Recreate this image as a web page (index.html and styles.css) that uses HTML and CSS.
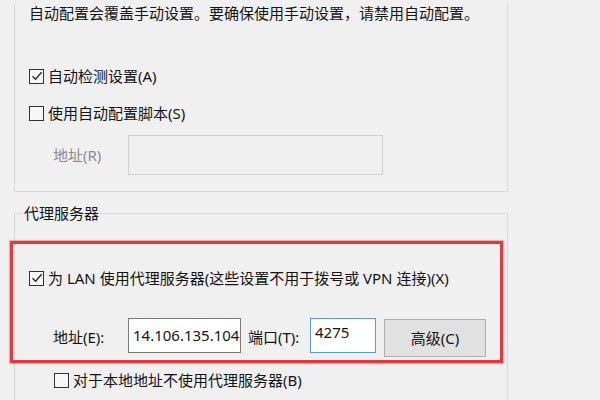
FILE: index.html
```html
<!DOCTYPE html>
<html lang="zh-CN">
<head>
<meta charset="utf-8">
<title>局域网(LAN)设置</title>
<link rel="stylesheet" href="styles.css">
</head>
<body>
<div class="group group-auto">
  <p class="desc">自动配置会覆盖手动设置。要确保使用手动设置，请禁用自动配置。</p>
  <div class="check-row row-detect">
    <span class="box checked"><svg viewBox="0 0 14 14" width="14" height="14"><path d="M2.5 7.2 L5.6 10.3 L11.6 3.2" fill="none" stroke="#2b2b2b" stroke-width="1.4"/></svg></span>
    <span class="label">自动检测设置(A)</span>
  </div>
  <div class="check-row row-script">
    <span class="box"></span>
    <span class="label">使用自动配置脚本(S)</span>
  </div>
  <div class="field-row row-url">
    <span class="field-label disabled">地址(R)</span>
    <span class="input input-disabled"></span>
  </div>
</div>

<div class="group group-proxy">
  <div class="legend">代理服务器</div>
  <div class="highlight">
    <div class="check-row row-lan">
      <span class="box checked"><svg viewBox="0 0 14 14" width="14" height="14"><path d="M2.5 7.2 L5.6 10.3 L11.6 3.2" fill="none" stroke="#2b2b2b" stroke-width="1.4"/></svg></span>
      <span class="label">为 LAN 使用代理服务器(这些设置不用于拨号或 VPN 连接)(X)</span>
    </div>
    <div class="field-row row-proxy">
      <span class="field-label addr-label">地址(E):</span>
      <span class="input input-addr">14.106.135.104</span>
      <span class="field-label port-label">端口(T):</span>
      <span class="input input-port">4275</span>
      <span class="button">高级(C)</span>
    </div>
  </div>
  <div class="check-row row-bypass">
    <span class="box"></span>
    <span class="label">对于本地地址不使用代理服务器(B)</span>
  </div>
</div>
</body>
</html>
```

FILE: styles.css
```css
html, body {
  margin: 0;
  padding: 0;
  background: #f0f0f0;
}
body {
  width: 600px;
  height: 400px;
  overflow: hidden;
  font-family: "Noto Sans", "Noto Sans CJK SC", sans-serif;
  font-size: 15px;
  line-height: 20px;
  color: #141414;
}
.group {
  margin-left: 14px;
  width: 492px;
  border: 1px solid #d9d9d9;
}
.group-auto {
  border-top: none;
  padding-bottom: 16px;
}
.desc {
  margin: 3px 0 0 14px;
  white-space: nowrap;
}
.check-row {
  display: flex;
  align-items: center;
  height: 20px;
  white-space: nowrap;
}
.box {
  width: 15px;
  height: 15px;
  box-sizing: border-box;
  border: 1px solid #333;
  background: #f7f7f7;
  margin-right: 4px;
  display: flex;
  align-items: center;
  justify-content: center;
  flex: none;
}
.box svg {
  display: block;
  flex: none;
}
.row-detect { margin-top: 43px; padding-left: 14px; }
.row-script { margin-top: 17px; padding-left: 14px; }
.field-row {
  display: flex;
  align-items: flex-start;
  white-space: nowrap;
}
.row-url {
  margin-top: 12px;
  padding-left: 38px;
}
.field-label {
  display: block;
  flex: none;
}
.row-url .field-label {
  width: 75px;
  line-height: 40px;
}
.disabled {
  color: #8c8c8c;
}
.input {
  display: block;
  box-sizing: border-box;
  flex: none;
  background: #fff;
  border: 1px solid #7a7a7a;
  padding: 4px 0 0 4px;
}
.input-disabled {
  width: 255px;
  height: 40px;
  background: #f0f0f0;
  border-color: #cfcfcf;
}
.group-proxy {
  margin-top: 21px;
  height: 200px;
}
.legend {
  display: inline-block;
  margin: -11px 0 0 8px;
  padding: 0 1px;
  background: #f0f0f0;
  vertical-align: top;
}
.highlight {
  margin: 7px 0 0 -5px;
  width: 487px;
  border: 3px solid #dd3b40;
  box-shadow: 0 0 1px 1px rgba(221, 59, 64, 0.35);
  padding-bottom: 3px;
}
.row-lan {
  margin-top: 24px;
  padding-left: 16px;
}
.row-proxy {
  margin-top: 30px;
  padding-left: 40px;
}
.addr-label {
  width: 75px;
  line-height: 38px;
}
.input-addr {
  width: 113px;
  height: 35px;
  padding-top: 6px;
}
.port-label {
  width: 62px;
  margin-left: 7px;
  line-height: 38px;
}
.input-port {
  width: 66px;
  height: 35px;
  border-color: #5b9bd5;
  padding-top: 3px;
}
.button {
  display: block;
  flex: none;
  box-sizing: border-box;
  width: 102px;
  height: 38px;
  margin: 1px 0 0 8px;
  background: #e1e1e1;
  border: 1px solid #adadad;
  text-align: center;
  line-height: 36px;
}
.row-bypass {
  margin-top: 7px;
  padding-left: 39px;
}
```
